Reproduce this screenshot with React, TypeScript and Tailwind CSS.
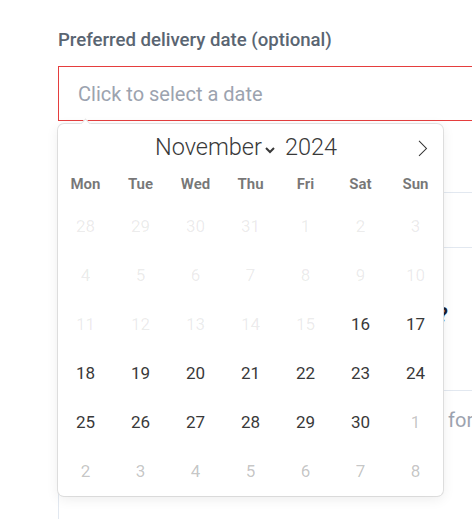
import React from "react";

type Day = { n: number; kind: "off" | "on" | "next" };

const days: Day[] = [
  ...[28, 29, 30, 31].map((n) => ({ n, kind: "off" as const })),
  ...Array.from({ length: 15 }, (_, i) => ({ n: i + 1, kind: "off" as const })),
  ...Array.from({ length: 15 }, (_, i) => ({ n: i + 16, kind: "on" as const })),
  ...Array.from({ length: 8 }, (_, i) => ({ n: i + 1, kind: "next" as const })),
];

const weekdays = ["Mon", "Tue", "Wed", "Thu", "Fri", "Sat", "Sun"];

function Calendar() {
  return (
    <div className="absolute left-0 top-full mt-[3px] z-10 w-[385px] rounded-[6px] bg-white shadow-[0_3px_13px_rgba(0,0,0,0.08),0_0_0_1px_#e6e6e6]">
      <div className="absolute -top-[4px] left-[24px] h-[7px] w-[7px] rotate-45 border-l border-t border-[#e6e6e6] bg-white" />
      <div className="flex h-[48px] items-center">
        <div className="w-[34px]" />
        <div className="flex flex-1 items-center justify-center pr-[9px] text-[23.5px] font-light text-[#393939]">
          <span>November</span>
          <svg width="12" height="8" viewBox="0 0 12 8" className="ml-[2px] mt-[3px]">
            <path d="M2 2l4 4 4-4" fill="none" stroke="#393939" strokeWidth="2" />
          </svg>
          <span className="ml-[9px]">2024</span>
        </div>
        <div className="flex w-[34px] pl-[5px]">
          <svg width="17" height="17" viewBox="0 0 17 17">
            <path
              d="M13.207 8.472l-7.854 7.854-0.707-0.707 7.146-7.146-7.146-7.148 0.707-0.707 7.854 7.854z"
              fill="#333"
            />
          </svg>
        </div>
      </div>
      <div className="grid h-[25px] grid-cols-7 items-center text-center text-[15px] font-bold text-[rgba(0,0,0,0.54)]">
        {weekdays.map((w) => (
          <span key={w}>{w}</span>
        ))}
      </div>
      <div className="grid grid-cols-7 pt-[5px]">
        {days.map((d, i) => (
          <span
            key={i}
            className={
              "flex h-[49px] items-center justify-center text-[17px] " +
              (d.kind === "on"
                ? "text-[#393939]"
                : d.kind === "next"
                ? "text-[rgba(57,57,57,0.3)]"
                : "text-[rgba(57,57,57,0.1)]")
            }
          >
            {d.n}
          </span>
        ))}
      </div>
    </div>
  );
}

export default function App() {
  return (
    <div className="h-screen w-screen overflow-hidden bg-white font-['Roboto',sans-serif]">
      <div className="w-[600px] pl-[58px] pt-[28px]">
        <label className="block text-[18.6px] font-medium leading-[24px] text-[#5a6572]">
          Preferred delivery date (optional)
        </label>
        <div className="relative mt-[14px]">
          <div className="flex h-[55px] items-center border border-[#e53e3e] pl-[19px] text-[20px] text-[#9ca3af]">
            Click to select a date
          </div>
          <Calendar />
        </div>

        <label className="mt-[22px] block text-[18.6px] font-medium leading-[24px] text-[#5a6572]">
          Preferred time slot
        </label>
        <div className="mt-[25px] flex h-[56px] items-center border border-[#e2e8f0] pl-[19px] text-[20px] text-[#9ca3af]">
          Any time
        </div>

        <h2 className="mt-[53px] w-[390px] text-right text-[20px] font-bold leading-[28px] text-[#1a202c]">
          Anything else we should know?
        </h2>

        <div className="mt-[61px] h-[140px] border border-[#e2e8f0] pl-[7px] pt-[15px] text-[20px] leading-[28px] whitespace-nowrap text-[#9ca3af]">
          Add any delivery instructions or notes here for the driver
        </div>
      </div>
    </div>
  );
}
